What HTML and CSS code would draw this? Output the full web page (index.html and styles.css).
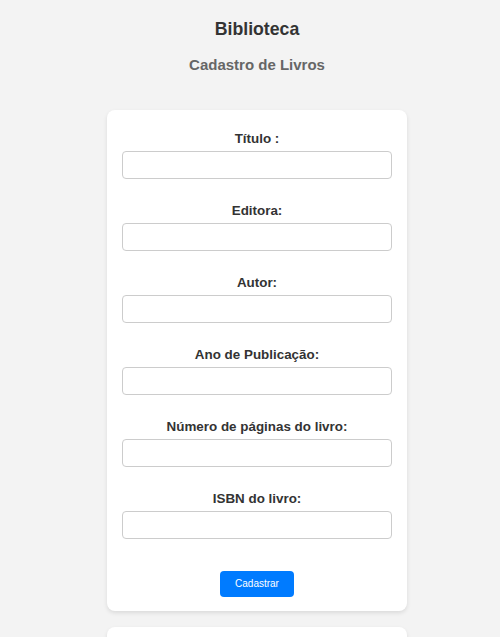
FILE: index.html
```html
<!DOCTYPE html>
<html lang="pt-BR">
<head>
<meta charset="utf-8">
<title>Biblioteca</title>
<link rel="stylesheet" href="styles.css">
</head>
<body>
<div class="page">
  <header class="header">
    <h1 class="title">Biblioteca</h1>
    <h2 class="subtitle">Cadastro de Livros</h2>
  </header>
  <form class="card">
    <div class="group">
      <label class="label">Título :</label>
      <input class="field" type="text">
    </div>
    <div class="group">
      <label class="label">Editora:</label>
      <input class="field" type="text">
    </div>
    <div class="group">
      <label class="label">Autor:</label>
      <input class="field" type="text">
    </div>
    <div class="group">
      <label class="label">Ano de Publicação:</label>
      <input class="field" type="text">
    </div>
    <div class="group">
      <label class="label">Número de páginas do livro:</label>
      <input class="field" type="text">
    </div>
    <div class="group">
      <label class="label">ISBN do livro:</label>
      <input class="field" type="text">
    </div>
    <div class="actions">
      <button class="btn" type="button">Cadastrar</button>
    </div>
  </form>
  <div class="card card-next"></div>
</div>
</body>
</html>
```
FILE: styles.css
```css
html, body {
  margin: 0;
  padding: 0;
}
body {
  background: #f3f3f3;
  font-family: "Liberation Sans", Arial, sans-serif;
  color: #333;
  overflow: hidden;
  height: 637px;
}
.page {
  padding-left: 14px;
}
.header {
  text-align: center;
  padding-top: 19px;
}
.title {
  margin: 0;
  font-size: 17.7px;
  line-height: 21px;
  font-weight: bold;
  color: #333;
}
.subtitle {
  margin: 16px 0 0;
  font-size: 15px;
  line-height: 17px;
  font-weight: bold;
  color: #666;
}
.card {
  width: 300px;
  box-sizing: border-box;
  margin: 37px auto 0;
  background: #fff;
  border-radius: 8px;
  box-shadow: 0 2px 4px rgba(0, 0, 0, 0.1);
  padding: 21px 15px 14px;
}
.group {
  display: flex;
  flex-direction: column;
  margin-bottom: 24px;
}
.label {
  display: block;
  text-align: center;
  font-size: 13.4px;
  line-height: 16px;
  font-weight: bold;
  color: #333;
  margin-bottom: 4px;
}
.field {
  display: block;
  box-sizing: border-box;
  width: 100%;
  height: 28px;
  margin: 0;
  border: 1px solid #ccc;
  border-radius: 4px;
  background: #fff;
  font-family: inherit;
}
.actions {
  display: flex;
  justify-content: center;
  padding-top: 8px;
}
.btn {
  box-sizing: border-box;
  width: 74px;
  height: 26px;
  padding: 0;
  border: none;
  border-radius: 4px;
  background: #007bff;
  color: #fff;
  font-family: "Liberation Sans", Arial, sans-serif;
  font-size: 10px;
  line-height: 26px;
}
.card-next {
  margin-top: 16px;
  height: 60px;
  padding: 0;
}
```
